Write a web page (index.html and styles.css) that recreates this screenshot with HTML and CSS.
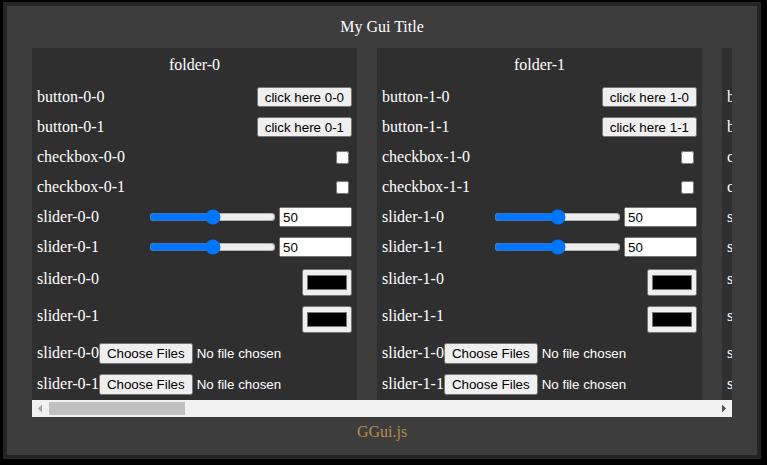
FILE: index.html
```html
<!DOCTYPE html>
<html lang="en">
<head>
<meta charset="utf-8">
<title>My Gui Title</title>
<link rel="stylesheet" href="styles.css">
</head>
<body>
<div class="frame">
  <div class="gui-title">My Gui Title</div>
  <div class="viewport">
    <div class="scroller">
      <section class="folder">
        <div class="folder-title">folder-0</div>
        <div class="row"><span class="label">button-0-0</span><button class="btn">click here 0-0</button></div>
        <div class="row"><span class="label">button-0-1</span><button class="btn">click here 0-1</button></div>
        <div class="row"><span class="label">checkbox-0-0</span><input type="checkbox" class="check"></div>
        <div class="row"><span class="label">checkbox-0-1</span><input type="checkbox" class="check"></div>
        <div class="row"><span class="label">slider-0-0</span><span class="slider"><input type="range" class="range"><input type="text" class="num" value="50"></span></div>
        <div class="row"><span class="label">slider-0-1</span><span class="slider"><input type="range" class="range"><input type="text" class="num" value="50"></span></div>
        <div class="row row-color group-start"><span class="label">slider-0-0</span><input type="color" class="color"></div>
        <div class="row row-color"><span class="label">slider-0-1</span><input type="color" class="color"></div>
        <div class="row row-file"><span class="label">slider-0-0</span><input type="file" multiple class="file"></div>
        <div class="row row-file"><span class="label">slider-0-1</span><input type="file" multiple class="file"></div>
      </section>
      <section class="folder">
        <div class="folder-title">folder-1</div>
        <div class="row"><span class="label">button-1-0</span><button class="btn">click here 1-0</button></div>
        <div class="row"><span class="label">button-1-1</span><button class="btn">click here 1-1</button></div>
        <div class="row"><span class="label">checkbox-1-0</span><input type="checkbox" class="check"></div>
        <div class="row"><span class="label">checkbox-1-1</span><input type="checkbox" class="check"></div>
        <div class="row"><span class="label">slider-1-0</span><span class="slider"><input type="range" class="range"><input type="text" class="num" value="50"></span></div>
        <div class="row"><span class="label">slider-1-1</span><span class="slider"><input type="range" class="range"><input type="text" class="num" value="50"></span></div>
        <div class="row row-color group-start"><span class="label">slider-1-0</span><input type="color" class="color"></div>
        <div class="row row-color"><span class="label">slider-1-1</span><input type="color" class="color"></div>
        <div class="row row-file"><span class="label">slider-1-0</span><input type="file" multiple class="file"></div>
        <div class="row row-file"><span class="label">slider-1-1</span><input type="file" multiple class="file"></div>
      </section>
      <section class="folder">
        <div class="folder-title">folder-2</div>
        <div class="row"><span class="label">button-2-0</span><button class="btn">click here 2-0</button></div>
        <div class="row"><span class="label">button-2-1</span><button class="btn">click here 2-1</button></div>
        <div class="row"><span class="label">checkbox-2-0</span><input type="checkbox" class="check"></div>
        <div class="row"><span class="label">checkbox-2-1</span><input type="checkbox" class="check"></div>
        <div class="row"><span class="label">slider-2-0</span><span class="slider"><input type="range" class="range"><input type="text" class="num" value="50"></span></div>
        <div class="row"><span class="label">slider-2-1</span><span class="slider"><input type="range" class="range"><input type="text" class="num" value="50"></span></div>
        <div class="row row-color group-start"><span class="label">slider-2-0</span><input type="color" class="color"></div>
        <div class="row row-color"><span class="label">slider-2-1</span><input type="color" class="color"></div>
        <div class="row row-file"><span class="label">slider-2-0</span><input type="file" multiple class="file"></div>
        <div class="row row-file"><span class="label">slider-2-1</span><input type="file" multiple class="file"></div>
      </section>
    </div>
    <div class="hscroll" aria-hidden="true">
      <span class="hs-btn">
        <svg width="17" height="17" viewBox="0 0 17 17"><path d="M6 8.5 L10 4.5 L10 12.5 Z" fill="#a3a3a3"/></svg>
      </span>
      <span class="hs-track"><span class="hs-thumb"></span></span>
      <span class="hs-btn">
        <svg width="17" height="17" viewBox="0 0 17 17"><path d="M11 8.5 L7 4.5 L7 12.5 Z" fill="#505050"/></svg>
      </span>
    </div>
  </div>
  <div class="gui-footer">GGui.js</div>
</div>
</body>
</html>
```

FILE: styles.css
```css
html, body {
  margin: 0;
  padding: 0;
  background: #000;
}

body {
  font-family: "Liberation Serif", "Times New Roman", serif;
  font-size: 16px;
  line-height: 18px;
  color: #fff;
}

.frame {
  box-sizing: border-box;
  width: 758px;
  height: 457px;
  margin: 2px 0 0 3px;
  border: 4px solid #242424;
  background: #3d3d3d;
  display: flex;
  flex-direction: column;
}

.gui-title {
  text-align: center;
  padding: 12px 0;
}

.viewport {
  margin: 0 25px;
}

.scroller {
  display: flex;
  align-items: flex-start;
  gap: 20px;
  overflow: hidden;
}

.hscroll {
  display: flex;
  height: 17px;
  background: #f1f1f1;
}

.hs-btn {
  flex: 0 0 17px;
  height: 17px;
}

.hs-btn svg {
  display: block;
}

.hs-track {
  flex: 1;
  display: flex;
  align-items: center;
}

.hs-thumb {
  width: 136px;
  height: 13px;
  background: #c1c1c1;
}

.folder {
  flex: 0 0 325px;
  width: 325px;
  background: #2f2f2f;
}

.folder-title {
  text-align: center;
  padding: 8px 0;
}

.row {
  box-sizing: border-box;
  height: 30px;
  padding: 5px 5px 0;
  display: flex;
  align-items: flex-start;
  justify-content: space-between;
}

.row-color {
  height: 37px;
}

.row-file {
  height: 31px;
  justify-content: flex-start;
}

.group-start {
  margin-top: 2px;
}

.label {
  white-space: nowrap;
  padding-top: 1px;
}

.btn,
.num,
.file {
  font-family: "Liberation Sans", Arial, sans-serif;
  font-size: 13.333px;
}

.btn {
  box-sizing: border-box;
  height: 20px;
  padding: 1px 6px;
  margin: 0;
}

.check {
  width: 13px;
  height: 13px;
  margin: 4px 3px 3px 4px;
}

.slider {
  display: flex;
  align-items: center;
  height: 20px;
}

.range {
  width: 127px;
  margin: 0 3px 0 2px;
}

.num {
  box-sizing: border-box;
  width: 73px;
  height: 20px;
  padding: 1px 2px;
  margin: 0;
}

.color {
  box-sizing: border-box;
  width: 50px;
  height: 27px;
  margin: 0;
}

.file {
  color: #fff;
  margin: 0;
  height: 21px;
}

.gui-footer {
  text-align: center;
  padding-top: 6px;
  color: #b38f4d;
}
```
